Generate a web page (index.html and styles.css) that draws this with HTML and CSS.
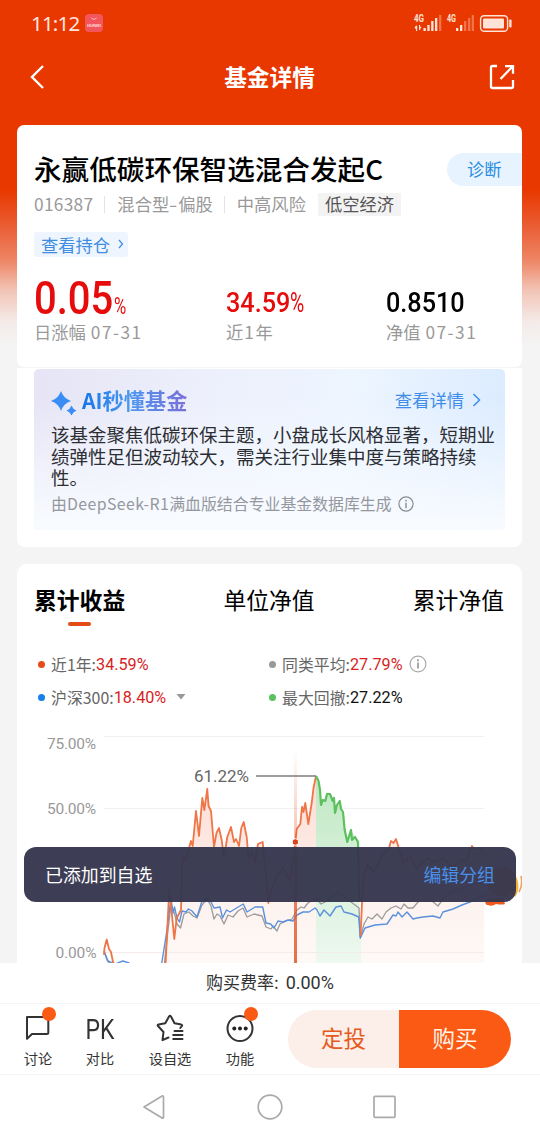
FILE: index.html
```html
<!DOCTYPE html>
<html lang="zh-CN">
  <head>
    <meta charset="utf-8">
    <title>基金详情</title>
    <link rel="stylesheet" href="styles.css">
  </head>
  <body>
    <div class="screen">
      <div class="status-bar">
        <span class="time">11:12</span>
        <svg class="app-badge" width="18" height="18" viewBox="0 0 18 18">
          <rect width="18" height="18" rx="4" fill="#f2565c" />
          <path d="M6.500 4q2.500 3 5 0" fill="none" stroke="#fbb" stroke-width="1" />
          <text x="9" y="12.500" text-anchor="middle" textLength="14" font-size="4" font-weight="700" fill="#ffd5d0">HUAWEI</text>
        </svg>
        <svg class="signals" width="100" height="20" viewBox="0 0 100 20">
          <g fill="#ffe3d8">
            <text x="2" y="9" class="net" textLength="10" lengthAdjust="spacingAndGlyphs">4G</text>
            <text x="35" y="9" class="net" textLength="9" lengthAdjust="spacingAndGlyphs">4G</text>
            <path d="M2.500 14.500l2-2.500v5zM7 12l2.500 2.500L7 17zM4 13h1.200v5H4zM7 12h1.200v5H7z" />
            <rect x="11.500" y="15" width="2.300" height="3" />
            <rect x="15.300" y="12" width="2.300" height="6" />
            <rect x="19.200" y="8" width="2.300" height="10" />
            <rect x="23" y="5" width="2.300" height="13" />
            <rect x="27" y="2" width="2.300" height="16" opacity=".35" />
            <rect x="44" y="15" width="2.300" height="3" />
            <rect x="48" y="12" width="2.300" height="6" />
            <rect x="52" y="8" width="2.300" height="10" opacity=".35" />
            <rect x="56" y="5" width="2.300" height="13" opacity=".35" />
            <rect x="59.700" y="2" width="2.300" height="16" opacity=".35" />
            <rect x="71" y="5.500" width="21" height="10" rx="1" />
            <rect x="97.200" y="6.500" width="2.400" height="8" rx="1" />
          </g>
          <rect x="68.600" y="2.700" width="27" height="15.600" rx="3.500" fill="none" stroke="#ffe3d8" stroke-width="1.400" />
        </svg>
      </div>

      <div class="nav-bar">
        <svg width="16" height="26" viewBox="0 0 16 26">
          <path d="M14 2L3 13l11 11" fill="none" stroke="#fff" stroke-width="2.400" />
        </svg>
        <h1>基金详情</h1>
        <svg width="26" height="26" viewBox="0 0 26 26" fill="none" stroke="#fff" stroke-width="2.300">
          <path d="M8 2H3.500Q2 2 2 3.500v19Q2 24 3.500 24h19q1.500 0 1.500-1.500V16" />
          <path d="M11.500 15L23 3M16 2.200h8v7.500" />
        </svg>
      </div>

      <div class="content">
        <div class="card summary">
          <div class="fund-name">永赢低碳环保智选混合发起C</div>
          <a class="diagnose">诊断</a>
          <div class="fund-info">
            <span class="code">016387</span>
            <i></i>
            <span>混合型<span class="dash">-</span>偏股</span>
            <i></i>
            <span>中高风险</span>
            <span class="tag">低空经济</span>
          </div>
          <a class="holdings">查看持仓
            <svg width="6" height="10" viewBox="0 0 6 10"><path d="M1 1l3.500 4L1 9" fill="none" stroke="#3f8de0" stroke-width="1.200" /></svg>
          </a>
          <div class="stats">
            <div class="stat">
              <div class="value big red"><b>0.05<small>%</small></b></div>
              <div class="label">日涨幅 <span class="date">07-31</span></div>
            </div>
            <div class="stat">
              <div class="value red"><b>34.59<small>%</small></b></div>
              <div class="label">近<span class="date">1</span>年</div>
            </div>
            <div class="stat">
              <div class="value"><b>0.8510</b></div>
              <div class="label">净值 <span class="date">07-31</span></div>
            </div>
          </div>
        </div>

        <div class="card ai-card">
          <div class="ai-box">
            <div class="ai-head">
              <svg width="26" height="26" viewBox="0 0 26 26" fill="#3a8df5">
                <path d="M10 0Q12.500 7.500 20 10Q12.500 12.500 10 20Q7.500 12.500 0 10Q7.500 7.500 10 0z" />
                <path d="M20.500 14.500Q21.800 18.200 25.500 19.500Q21.800 20.800 20.500 24.500Q19.200 20.800 15.500 19.500Q19.200 18.200 20.500 14.500z" />
              </svg>
              <span class="ai-title">AI秒懂基金</span>
              <a>查看详情
                <svg width="9" height="14" viewBox="0 0 9 14"><path d="M1.500 1l6 6-6 6" fill="none" stroke="#3f8de8" stroke-width="1.500" /></svg>
              </a>
            </div>
            <p>该基金聚焦低碳环保主题，小盘成长风格显著，短期业<br>绩弹性足但波动较大，需关注行业集中度与策略持续<br>性。</p>
            <div class="source">
              <span>由<span class="model">DeepSeek-R1</span>满血版结合专业基金数据库生成</span>
              <svg width="16" height="16" viewBox="0 0 16 16">
                <circle cx="8" cy="8" r="7.100" fill="none" stroke="#888c92" stroke-width="1.200" />
                <path d="M8 3.800v1.700M8 6.700v5.500" stroke="#888c92" stroke-width="1.400" />
              </svg>
            </div>
          </div>
        </div>

        <div class="card chart-card">
          <div class="tabs">
            <div class="tab active">累计收益</div>
            <div class="tab">单位净值</div>
            <div class="tab">累计净值</div>
          </div>
          <div class="legend">
            <div class="item orange">近1年:<b class="red">34.59%</b></div>
            <div class="item gray">同类平均:<b class="red">27.79%</b>
              <svg width="18" height="18" viewBox="0 0 18 18">
                <circle cx="9" cy="9" r="7.900" fill="none" stroke="#aaa" stroke-width="1.200" />
                <path d="M9 4.300v1.900M9 7.500v6" stroke="#999" stroke-width="1.700" />
              </svg>
            </div>
            <div class="item blue">沪深300:<b class="red">18.40%</b>
              <svg width="10" height="6" viewBox="0 0 10 6"><path d="M0.500 0h9L5 5.500z" fill="#999" /></svg>
            </div>
            <div class="item green">最大回撤:<b>27.22%</b></div>
          </div>

          <svg class="chart" width="505" height="243" viewBox="17 720 505 243">
            <defs>
              <linearGradient id="areaOrange" x1="0" y1="776" x2="0" y2="963" gradientUnits="userSpaceOnUse">
                <stop offset="0" stop-color="#fbdcd2" />
                <stop offset=".6" stop-color="#fdf1ed" />
                <stop offset="1" stop-color="#fef9f7" />
              </linearGradient>
              <linearGradient id="areaGreen" x1="0" y1="776" x2="0" y2="963" gradientUnits="userSpaceOnUse">
                <stop offset="0" stop-color="#bfe8c3" />
                <stop offset="1" stop-color="#eef9f0" />
              </linearGradient>
              <linearGradient id="marker" x1="0" y1="750" x2="0" y2="963" gradientUnits="userSpaceOnUse">
                <stop offset="0" stop-color="#e2572c" stop-opacity="0" />
                <stop offset=".35" stop-color="#e2572c" stop-opacity=".3" />
                <stop offset=".7" stop-color="#e2572c" stop-opacity=".75" />
                <stop offset="1" stop-color="#e2572c" stop-opacity=".85" />
              </linearGradient>
            </defs>
            <path d="M104 736.500H484M104 808.500H484M104 880.500H484M104 952.500H484" stroke="#f1f1f1" />
            <path fill="url(#areaOrange)" d="M165 963L169 888 174 939 177 918 181 910 182.500 857 185.500 860 191 841 193 846 196 811 199 836 202 798 204 810 207.300 789 211 811 214 847 219 828 224 858 227 837 231 827 234 842 239 846 243.700 822 248.500 858 255 862 258 844 262.700 842 268.300 903 277 875 283 868 290 881 295.300 842 297 829 300.300 824 302 807 305.300 803 308.300 824 312 803 316 776V963zM361 963V930L363 882 367 865 389 848 396 839 403 862 417 868 427 858 443 858 453 868 466 861 472 846 484 853V963z" />
            <path fill="url(#areaGreen)" d="M316 776L320 790 321 805 325 801 328 793 333 798 335 813 340 801 343 812 345 830 347 842 351 830 355 837 358 842 359.500 902 361 938V963H316z" />
            <path d="M104 952.500H484" stroke="#f4ece9" />
            <g fill="none" stroke-linejoin="round">
              <path stroke="#9b9b9b" stroke-width="1.300" d="M104 951L107 960 112 967H164L168 930 171 905 174 912 177 924 180.500 928 184 914 189 912 193 916 197 918 202 905 207 899 211 906 214 919 217 914 220 916 224 924 228 915 233 917 238 911 243 908 247 917 254 914 262 916 266 927 271 929 273 926 277 931 280 924 286 921 292 919 297 910 301 907 304 908 308 903 313 900 317 899 321 904 327 901 333 896 339 893 345 897 351 902 355 905 359 908 360.300 938 364 924 368 917 372 919 377 914 382 919 386 912 391 908 396 906 401 909 404 904 408 908 413 908 418 902 424 900 432 901 438 906 443 899 452 892 470 885 484 882" />
              <path stroke="#5b91dc" stroke-width="1.400" d="M104 951L108 961 115 964 123 961 129 963 140 970 161 968 167 930 171 898 173 913 174.500 907 177 918 179.500 922 182 911 186 912 188.500 909 192 911 197 917 201.700 902 207 898 211 902 214 908 220 907 222.500 918 226.500 910 230 912 236.500 908 243.300 904 247 912 255 907 262.700 907 266 923 270.700 924 274 928 278 921 283 922 288 920 293 921 297 915 303 912 309 912 315 908 317 910 320 916 324 910 330 916 336 907 341 906 344 912 352 914 358.700 917 360.300 938 365 928 375 925 387 924 393 915 396 916 398 912 402 917 407 912 413 919 417 918 423 917 433 916 440 918 443 912 453 909 462 905 470 902 484 895" />
              <path stroke="#ef7446" stroke-width="1.800" d="M104 955L104.500 948 106.700 939.500 109 949 111 952 113 962 118 970H163L165.700 962 169.300 888 174.300 939 176.700 918 181 910 182.500 857 185.500 860 191 841 192.700 846 196 811 199 836 202.300 798 204.300 810 207.300 789 208.500 806 211 811 214 847 216.500 833 219 828 221.700 840 224 858 227.300 837 231 827 234 842 236 839 239 846 241.300 828 243.700 822 246.700 837 248.500 858 252 852 255 862 258 844 262.700 842 265 865 268.300 903 272 888 277 875 283 868 290 881 295.300 842 296.700 829 300.300 824 302 807 303.500 812 305.300 803 308.300 824 311.700 803 313.500 788 316 776" />
              <path stroke="#ef7446" stroke-width="1.800" d="M360.500 936L363 882 367 865 374 872 382 856 389 848 391 841 393.500 843 396 839 398.500 847 403 862 410 857 417 868 427 858 434 862 443 858 453 868 460 860 466 861 472 846 474 849 479 848 484 853" />
              <path stroke="#5dc05e" stroke-width="2.200" d="M316 776L318.500 781 320 790 321 805 323 800 325.300 801 327 794 330 794 332.700 801 334 798 335 813 337 805 339.700 801 341 809 343 812 344.700 830 347.300 842 351 830 352 840 355 837 358 842 359.300 902" />
            </g>
            <rect x="294" y="750" width="3" height="213" fill="url(#marker)" />
            <circle cx="295.400" cy="842" r="3.300" fill="#d8451a" stroke="#fff" stroke-width="1" />
            <path d="M256 776H316" stroke="#7c7c7c" stroke-width="1.700" />
            <g class="axis">
              <text x="47" y="749" textLength="49">75.00%</text>
              <text x="47" y="814" textLength="49">50.00%</text>
              <text x="55.500" y="958" textLength="41">0.00%</text>
            </g>
            <text class="peak" x="194" y="782" textLength="55">61.22%</text>
            <!-- mascot -->
            <circle cx="502" cy="882" r="15" fill="#f39a45" />
            <path d="M486 899q-2 6 2 6 4 2 8-1 6 1 9 0l-2-6z" fill="#f0581c" />
            <path d="M515 878q4 9-1 18" fill="none" stroke="#f5b13d" stroke-width="3.400" />
            <path d="M521 876q2 9-2 16" fill="none" stroke="#f3a25a" stroke-width="1.600" />
          </svg>
        </div>
      </div>

      <div class="toast">
        <span>已添加到自选</span>
        <a>编辑分组</a>
      </div>

      <div class="footer">
        <div class="fee">购买费率: <span>0.00%</span></div>
        <div class="actions">
          <div class="action dot">
            <svg width="28" height="28" viewBox="0 0 28 28">
              <path d="M3 3h20q1.300 0 1.300 1.300v14.400q0 1.300-1.300 1.300H8L3 24.700z" fill="none" stroke="#333" stroke-width="2" stroke-linejoin="round" />
            </svg>
            <span>讨论</span>
          </div>
          <div class="action">
            <div class="pk">PK</div>
            <span>对比</span>
          </div>
          <div class="action">
            <svg width="28" height="28" viewBox="0 0 28 28" fill="none" stroke="#333" stroke-width="2" stroke-linejoin="round" stroke-linecap="round">
              <path d="M12.500 23.500l-6 2.700 1-8.200L1.800 11.800q-.5-1 .7-1.200l6.800-1.300 3.700-6.800q1-1.300 2 0l3.500 6.800 6.800 1.300q1.300.4.500 1.500l-1.500 1.900" />
              <path d="M18.500 17h8M17.200 21h9.300M17.200 25h9.300" />
            </svg>
            <span>设自选</span>
          </div>
          <div class="action dot">
            <svg width="28" height="28" viewBox="0 0 28 28">
              <circle cx="14" cy="14.500" r="12.500" fill="none" stroke="#333" stroke-width="2" />
              <g fill="#222">
                <circle cx="8.300" cy="14.500" r="2" />
                <circle cx="14" cy="14.500" r="2" />
                <circle cx="19.700" cy="14.500" r="2" />
              </g>
            </svg>
            <span>功能</span>
          </div>
          <div class="buttons">
            <div class="invest">定投</div>
            <div class="buy">购买</div>
          </div>
        </div>
        <div class="system-nav">
          <svg width="26" height="26" viewBox="0 0 26 26" fill="none" stroke="#aaa" stroke-width="1.700"><path d="M2 13L20.500 1.800q1 0 1 1v20.400q0 1-1 1z" stroke-linejoin="round" /></svg>
          <svg width="26" height="26" viewBox="0 0 26 26" fill="none" stroke="#aaa" stroke-width="1.700"><circle cx="13" cy="13" r="11.800" /></svg>
          <svg width="26" height="26" viewBox="0 0 26 26" fill="none" stroke="#aaa" stroke-width="1.700"><rect x="2" y="2.300" width="21" height="21" rx="1" /></svg>
        </div>
      </div>
    </div>
  </body>
</html>
```
FILE: styles.css
```css
* {
  box-sizing: border-box;
}
body {
  margin: 0;
  font-family: "Noto Sans CJK SC", sans-serif;
  color: #000;
}
svg {
  display: block;
  flex: none;
}
.screen {
  position: relative;
  display: flex;
  flex-direction: column;
  width: 540px;
  height: 1140px;
  overflow: hidden;
  background: linear-gradient(#e83800 0, #e83800 190px, #ea5f36 228px, #ee8868 262px, #f2c4b6 290px, #f4ebe8 322px, #f4f4f4 345px);
}
.red {
  color: #e60c0c;
}

/* top bars */
.status-bar {
  display: flex;
  align-items: center;
  height: 46px;
  padding: 0 28px 0 31px;
}
.time {
  width: 49px;
  font: 20.5px/46px "Noto Sans", sans-serif;
  letter-spacing: -0.8px;
  color: #ffe6dc;
}
.app-badge {
  margin-left: 5px;
}
.signals {
  margin-left: auto;
}
.net {
  font: 700 10px "Roboto", sans-serif;
}
.nav-bar {
  display: flex;
  align-items: center;
  justify-content: space-between;
  height: 62px;
  padding: 0 25px 0 29px;
}
.nav-bar h1 {
  margin: 0 0 0 5px;
  font-size: 22.7px;
  font-weight: 700;
  line-height: 34px;
  color: #fff;
}

/* cards */
.content {
  flex: none;
  height: 855px;
  padding: 17px 18px 0 17px;
  overflow: hidden;
}
.card {
  width: 505px;
  background: #fff;
}
.summary {
  position: relative;
  height: 242px;
  padding: 23px 17px 0;
  border-radius: 7px;
}
.fund-name {
  height: 40px;
  font-size: 27.6px;
  font-weight: 500;
  line-height: 40px;
  white-space: nowrap;
}
.diagnose {
  position: absolute;
  top: 28px;
  right: 0;
  width: 75px;
  height: 33px;
  padding-left: 20px;
  border-radius: 17px 0 0 17px;
  background: #e7f3ff;
  font-size: 17.3px;
  line-height: 32px;
  color: #2b8de0;
}
.fund-info {
  display: flex;
  align-items: center;
  height: 24px;
  margin-top: 4px;
  font-size: 17.3px;
  line-height: 24px;
  color: #999;
}
.fund-info i {
  width: 1px;
  height: 17px;
  margin: 0 12px 0 11px;
  background: #e4e4e4;
}
.code {
  letter-spacing: 0.3px;
}
.dash {
  display: inline-block;
  width: 9px;
  transform: scaleX(1.4);
  transform-origin: left;
}
.tag {
  height: 23px;
  margin-left: 12px;
  padding: 0 7px;
  background: #f3f3f3;
  line-height: 22px;
  color: #555;
}
.holdings {
  display: flex;
  align-items: center;
  width: 94px;
  height: 25px;
  margin-top: 16px;
  padding: 0 0 1px 7px;
  gap: 8px;
  border-radius: 3px;
  background: #eef5fe;
  font-size: 17.3px;
  color: #3f8de0;
}
.stats {
  display: grid;
  grid-template-columns: 192px 160px 1fr;
  margin-top: 11px;
}
.value {
  height: 52px;
  font: 28px/70px "Roboto", sans-serif;
  white-space: nowrap;
}
.value b {
  display: inline-block;
  font-weight: 500;
  transform: scaleX(0.9);
  transform-origin: left;
}
.value small {
  display: inline-block;
  font-size: 27px;
  font-weight: 400;
  transform: scaleX(0.8);
  transform-origin: left;
}
.value.big {
  font-size: 46px;
  line-height: 60px;
}
.big b {
  transform: scaleX(0.87);
}
.big small {
  margin-left: 1px;
  font-size: 24px;
}
.label {
  font-size: 17.3px;
  line-height: 24px;
  white-space: nowrap;
  color: #999;
}
.date {
  margin-left: 1px;
  letter-spacing: 1.5px;
}

/* AI summary */
.ai-card {
  height: 179px;
  margin-top: 1px;
  padding: 1px 17px 0;
  border-radius: 0 0 8px 8px;
}
.ai-box {
  height: 161px;
  padding: 15px 0 0 17px;
  border-radius: 5px 5px 0 0;
  background:
    linear-gradient(rgba(255, 255, 255, 0) 20%, rgba(248, 251, 255, 0.97) 95%),
    linear-gradient(100deg, #e6e4f5 0%, #edf0fc 35%, #edf5ff 65%, #d9eaff 100%);
}
.ai-head {
  display: flex;
  align-items: center;
  height: 32px;
}
.ai-head > svg {
  margin-top: 8px;
}
.ai-title {
  margin-left: 5px;
  background: linear-gradient(90deg, #1677e8, #4b98f0 45%, #7a6fd6);
  background-clip: text;
  -webkit-background-clip: text;
  font-size: 21.2px;
  font-weight: 700;
  line-height: 32px;
  color: transparent;
}
.ai-head a {
  display: flex;
  align-items: center;
  gap: 8px;
  margin: -1px 24px 0 auto;
  font-size: 17.3px;
  color: #3f8de8;
}
.ai-box p {
  margin: 8px 0 0;
  font-size: 18.5px;
  line-height: 21.5px;
  white-space: nowrap;
  color: #2c2e33;
}
.source {
  display: flex;
  align-items: center;
  gap: 6px;
  margin-top: 3px;
  font-size: 15.9px;
  line-height: 24px;
  color: #94989e;
}
.model {
  letter-spacing: 0.4px;
}

/* chart */
.chart-card {
  height: 420px;
  margin-top: 17px;
  border-radius: 10px 10px 0 0;
}
.tabs {
  display: flex;
  justify-content: space-between;
  height: 86px;
  padding: 19px 18px 0 17px;
}
.tab {
  font-size: 22.8px;
  line-height: 34px;
}
.active {
  font-weight: 700;
}
.active::after {
  content: "";
  display: block;
  width: 23px;
  height: 4px;
  margin: 5px auto 0;
  border-radius: 2px;
  background: #e34c18;
}
.legend {
  display: grid;
  grid-template-columns: 231px 1fr;
  grid-auto-rows: 33px;
  height: 70px;
  padding-left: 21px;
}
.item {
  display: flex;
  align-items: center;
  height: 28px;
  font-size: 15.9px;
  color: #666;
}
.item::before {
  content: "";
  width: 7px;
  height: 7px;
  margin-right: 6px;
  border-radius: 50%;
}
.item b {
  font: 16.2px "Roboto", sans-serif;
  color: #111;
}
.item b.red {
  color: #d81e1e;
}
.item svg {
  margin-left: 6px;
}
.orange::before {
  background: #e84a18;
}
.gray::before {
  background: #999;
}
.blue::before {
  background: #1480e8;
}
.green::before {
  background: #5dc05e;
}
.blue svg {
  margin-left: 10px;
}
.axis {
  font: 15.500px "Roboto", sans-serif;
  fill: #999;
}
.peak {
  font: 17px "Roboto", sans-serif;
  fill: #666;
}

.toast {
  position: absolute;
  top: 847px;
  left: 24px;
  display: flex;
  align-items: center;
  justify-content: space-between;
  width: 492px;
  height: 55px;
  padding: 0 21px 2px;
  border-radius: 12px;
  background: rgba(53, 54, 78, 0.96);
  font-size: 17.9px;
  color: #fff;
}
.toast a {
  color: #4a8fe8;
}

/* bottom */
.footer {
  flex: 1;
  background: #fff;
}
.fee {
  height: 41px;
  border-bottom: 1px solid #f4f4f4;
  font-size: 17px;
  line-height: 38px;
  text-align: center;
  color: #333;
}
.fee span {
  margin-left: 3px;
  font-family: "Roboto", sans-serif;
  font-size: 18px;
}
.actions {
  display: grid;
  grid-template-columns: 70px 54px 86px 54px 1fr;
  height: 71px;
  padding: 6px 0 0 3px;
  border-bottom: 1px solid #f4f4f4;
}
.action {
  position: relative;
  display: flex;
  flex-direction: column;
  align-items: center;
  padding-top: 4px;
  font-size: 14.2px;
  line-height: 20px;
  color: #333;
}
.action svg,
.pk {
  height: 28px;
  margin-bottom: 6px;
}
.pk {
  font: 27px/33px "Roboto", sans-serif;
  transform: scaleX(0.85);
}
.dot::after {
  content: "";
  position: absolute;
  top: -3px;
  left: calc(50% + 3.5px);
  width: 14px;
  height: 14px;
  border-radius: 50%;
  background: #fb5a14;
}
.buttons {
  display: flex;
  width: 223px;
  height: 58px;
  margin-left: 21px;
  border-radius: 29px;
  overflow: hidden;
  font-size: 22.5px;
  line-height: 55px;
  text-align: center;
}
.invest {
  width: 111px;
  background: #fceee8;
  color: #e65a20;
}
.buy {
  flex: 1;
  background: #fb5a14;
  color: #fff3e6;
}
.system-nav {
  display: flex;
  justify-content: center;
  gap: 89px;
  padding-top: 19px;
}
```
